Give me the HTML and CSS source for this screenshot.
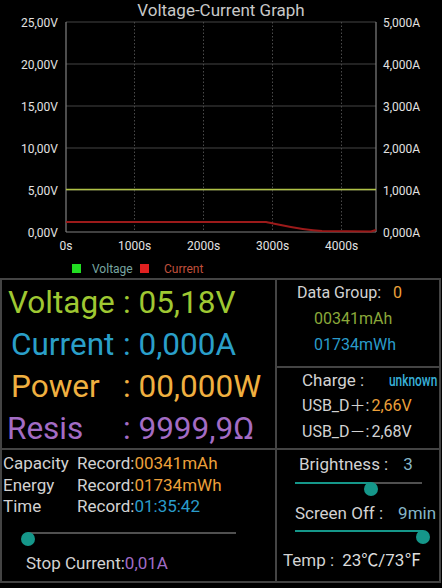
FILE: index.html
```html
<!DOCTYPE html>
<html lang="en">
  <head>
    <meta charset="UTF-8" />
    <title>USB Meter</title>
    <link rel="stylesheet" href="styles.css">
  </head>
  <body>
    <svg class="graph" width="442" height="278" viewBox="0 0 442 278">
      <text class="graph-title" x="221" y="16">Voltage-Current Graph</text>

      <!-- grid -->
      <g class="grid">
        <line x1="66" y1="22" x2="376" y2="22" />
        <line x1="66" y1="64" x2="376" y2="64" />
        <line x1="66" y1="106" x2="376" y2="106" />
        <line x1="66" y1="148" x2="376" y2="148" />
        <line x1="66" y1="190" x2="376" y2="190" />
      </g>
      <g class="grid-dots">
        <line x1="134.5" y1="22" x2="134.5" y2="232" />
        <line x1="203.5" y1="22" x2="203.5" y2="232" />
        <line x1="272.5" y1="22" x2="272.5" y2="232" />
        <line x1="341.5" y1="22" x2="341.5" y2="232" />
      </g>
      <g class="axis">
        <line x1="66" y1="22" x2="66" y2="232" />
        <line x1="376" y1="22" x2="376" y2="232" />
        <line x1="66" y1="232" x2="376" y2="232" />
      </g>

      <!-- labels -->
      <g class="label-left">
        <text x="58" y="26.5">25,00V</text>
        <text x="58" y="68.5">20,00V</text>
        <text x="58" y="110.5">15,00V</text>
        <text x="58" y="152.5">10,00V</text>
        <text x="58" y="194.5">5,00V</text>
        <text x="58" y="236.5">0,00V</text>
      </g>
      <g class="label-right">
        <text x="383" y="26.5">5,000A</text>
        <text x="383" y="68.5">4,000A</text>
        <text x="383" y="110.5">3,000A</text>
        <text x="383" y="152.5">2,000A</text>
        <text x="383" y="194.5">1,000A</text>
        <text x="383" y="236.5">0,000A</text>
      </g>
      <g class="label-time">
        <text x="66" y="250">0s</text>
        <text x="134.5" y="250">1000s</text>
        <text x="203.5" y="250">2000s</text>
        <text x="272.5" y="250">3000s</text>
        <text x="341.5" y="250">4000s</text>
      </g>

      <!-- data -->
      <path class="line-current" d="M66 222 L266 222 C282 225 300 230 322 231 L371 231.5 L376 230" />
      <path class="line-voltage" d="M66 189.5 L376 189.5" />

      <!-- legend -->
      <rect x="72" y="264" width="9" height="9" fill="#22dd22" />
      <text class="legend-voltage" x="92" y="272.5">Voltage</text>
      <rect x="140" y="264" width="9" height="9" fill="#e02020" />
      <text class="legend-current" x="164" y="272.5">Current</text>
    </svg>

    <div class="panel">
      <div class="cell readings">
        <div class="reading voltage"><span class="name">Voltage</span>: 05,18V</div>
        <div class="reading current"><span class="name">Current</span>: 0,000A</div>
        <div class="reading power"><span class="name">Power</span>: 00,000W</div>
        <div class="reading resis"><span class="name">Resis</span>: 9999,9Ω</div>
      </div>

      <div class="side">
        <div class="cell group">
          <div class="group-title">Data Group:<span class="orange group-num">0</span></div>
          <div class="group-value green">00341mAh</div>
          <div class="group-value blue">01734mWh</div>
        </div>
        <div class="cell usb">
          <div class="usb-row charge">Charge :<span class="unknown">unknown</span></div>
          <div class="usb-row">USB_D＋:<span class="orange usb-val">2,66V</span></div>
          <div class="usb-row">USB_D－:<span class="usb-val">2,68V</span></div>
        </div>
      </div>

      <div class="cell records">
        <div class="record"><span class="record-name">Capacity</span>Record:<span class="orange">00341mAh</span></div>
        <div class="record"><span class="record-name">Energy</span>Record:<span class="orange">01734mWh</span></div>
        <div class="record"><span class="record-name">Time</span>Record:<span class="blue">01:35:42</span></div>

        <div class="slider stop-slider">
          <div class="track"><div class="fill" style="width: 0%"></div></div>
          <div class="thumb" style="left: 0%"></div>
        </div>
        <div class="stop">Stop Current:<span class="purple">0,01A</span></div>
      </div>

      <div class="cell settings">
        <div class="setting brightness">Brightness :<span class="setting-val">3</span></div>
        <div class="slider bright-slider">
          <div class="track"><div class="fill" style="width: 60%"></div></div>
          <div class="thumb" style="left: 60%"></div>
        </div>
        <div class="setting screen">Screen Off :<span class="setting-val">9min</span></div>
        <div class="slider screen-slider">
          <div class="track"><div class="fill" style="width: 100%"></div></div>
          <div class="thumb" style="left: 100%"></div>
        </div>
        <div class="setting temp">Temp :<span class="temp-val">23℃/73℉</span></div>
      </div>
    </div>
  </body>
</html>
```

FILE: styles.css
```css
body {
  margin: 0;
  background: #000;
  color: #d2d2d2;
  font-family: Roboto, "Noto Sans CJK SC", sans-serif;
  width: 442px;
  height: 588px;
  overflow: hidden;
}

/* graph */
.graph {
  display: block;
  font-family: Roboto, sans-serif;
}

.graph-title {
  font-size: 17px;
  fill: #c8c8c8;
  text-anchor: middle;
}

.grid line {
  stroke: #444;
  stroke-width: 1;
}

.grid-dots line {
  stroke: #4a4a4a;
  stroke-width: 1;
  stroke-dasharray: 1.5 2;
}

.axis line {
  stroke: #808080;
  stroke-width: 1.2;
}

.label-left text,
.label-right text,
.label-time text {
  font-size: 12px;
  fill: #e2e2e2;
}

.label-left text {
  text-anchor: end;
}

.label-time text {
  text-anchor: middle;
}

.line-voltage {
  fill: none;
  stroke: #b0c246;
  stroke-width: 1.6;
}

.line-current {
  fill: none;
  stroke: #9c1a1a;
  stroke-width: 2;
}

.legend-voltage {
  font-size: 12px;
  fill: #78a6a0;
}

.legend-current {
  font-size: 12px;
  fill: #c0503c;
}

/* panel */
.panel {
  display: grid;
  grid-template-columns: 273px 162px;
  grid-template-rows: 168px 131px;
  gap: 2px;
  padding: 2px;
  width: 441px;
  box-sizing: border-box;
  background: #444;
}

.cell {
  background: #000;
}

.side {
  display: flex;
  flex-direction: column;
  gap: 2px;
}

.orange {
  color: #eda03a;
}

.blue {
  color: #2a9ccb;
}

.green {
  color: #8aa83a;
}

.purple {
  color: #a06cc6;
}

/* readings */
.readings {
  padding-top: 1.5px;
}

.reading {
  display: flex;
  font-size: 31.5px;
  line-height: 42px;
  white-space: nowrap;
}

.reading .name {
  width: 121px;
  box-sizing: border-box;
}

.voltage {
  color: #9fc832;
}

.voltage .name {
  padding-left: 6px;
}

.current {
  color: #2a9fc9;
}

.current .name {
  padding-left: 9px;
}

.power {
  color: #f0b040;
}

.power .name {
  padding-left: 9px;
}

.resis {
  color: #a36cc4;
}

.resis .name {
  padding-left: 5px;
}

/* data group */
.group {
  height: 86px;
  font-size: 16px;
  line-height: 26px;
}

.group-title {
  padding-left: 20px;
}

.group-num {
  margin-left: 12px;
}

.group-value {
  padding-left: 37px;
}

/* usb */
.usb {
  flex: 1;
  font-size: 16px;
  line-height: 26px;
  padding-left: 25px;
  white-space: nowrap;
  overflow: hidden;
}

.charge {
  font-size: 17px;
  margin-top: -1px;
}

.unknown {
  display: inline-block;
  margin-left: 25px;
  color: #38b0d8;
  font-weight: 500;
  transform: scaleX(0.7);
  transform-origin: left center;
}

.usb-val {
  margin-left: 2px;
}

/* records */
.records {
  padding: 3px 0 0 1px;
  font-size: 17px;
}

.record {
  display: flex;
  line-height: 21.5px;
  white-space: nowrap;
}

.record-name {
  width: 74px;
}

.stop {
  margin-top: 5.5px;
  padding-left: 23px;
  line-height: 22px;
}

/* sliders */
.slider {
  position: relative;
  height: 14px;
}

.track {
  height: 2px;
  margin-top: 6px;
  background: #505050;
}

.fill {
  height: 2px;
  background: #15978a;
}

.thumb {
  position: absolute;
  top: 0;
  width: 14px;
  height: 14px;
  margin-left: -7px;
  border-radius: 50%;
  background: #15978a;
}

.stop-slider {
  margin: 14.5px 0 0 25px;
  width: 208px;
}

/* settings */
.settings {
  padding-top: 3px;
  font-size: 17px;
}

.setting {
  line-height: 22px;
  white-space: nowrap;
}

.setting-val {
  margin-left: 15px;
  color: #86b6c8;
}

.brightness {
  padding-left: 22px;
}

.bright-slider {
  margin: 7px 0 0 18px;
  width: 127px;
}

.screen {
  margin-top: 6px;
  padding-left: 18px;
}

.screen-slider {
  margin: 5.5px 0 0 18px;
  width: 128px;
}

.temp {
  margin-top: 4.5px;
  padding-left: 6px;
}

.temp-val {
  margin-left: 8px;
  color: #dcdcdc;
}
```
